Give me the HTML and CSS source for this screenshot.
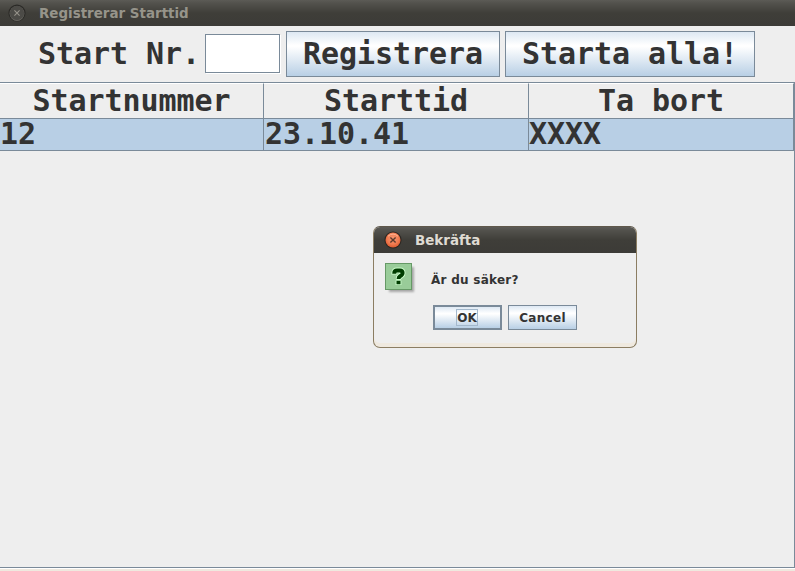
FILE: index.html
```html
<!DOCTYPE html>
<html lang="sv">
<head>
<meta charset="utf-8">
<title>Registrerar Starttid</title>
<link rel="stylesheet" href="styles.css">
</head>
<body>
<div class="window">
  <header class="titlebar">
    <svg class="close" width="18" height="18" viewBox="0 0 18 18">
      <circle cx="9" cy="9" r="8.6" fill="#2b2a27"/>
      <circle cx="9" cy="9.5" r="7.4" fill="#6b6963"/>
      <circle cx="9" cy="9" r="7.2" fill="#4c4b47"/>
      <path d="M6.4 6.4l5.2 5.2M11.6 6.4l-5.2 5.2" stroke="#97948b" stroke-width="1.1"/>
    </svg>
    <span class="title">Registrerar Starttid</span>
  </header>
  <form class="toolbar">
    <label class="label" for="nr">Start Nr.</label>
    <input class="field" id="nr" type="text">
    <button class="btn register" type="button">Registrera</button>
    <button class="btn start" type="button">Starta alla!</button>
  </form>
  <main class="scroll">
    <div class="grid head">
      <div>Startnummer</div><div>Starttid</div><div>Ta bort</div>
    </div>
    <div class="grid row">
      <div>12</div><div>23.10.41</div><div>XXXX</div>
    </div>
  </main>
</div>
<section class="dialog" role="dialog">
  <header class="dialog-title">
    <svg class="close" width="18" height="18" viewBox="0 0 18 18">
      <defs>
        <radialGradient id="orange" cx=".5" cy=".4" r=".6">
          <stop offset="0" stop-color="#f79873"/><stop offset=".65" stop-color="#f07b50"/><stop offset="1" stop-color="#dc5a2e"/>
        </radialGradient>
      </defs>
      <circle cx="9" cy="9" r="8.6" fill="#2b2622"/>
      <circle cx="9" cy="9" r="7.5" fill="url(#orange)"/>
      <path d="M4 5.2Q9 .9 14 5.2" fill="none" stroke="#ffb594" stroke-width="1"/>
      <path d="M6.4 6.4l5.2 5.2M11.6 6.4l-5.2 5.2" stroke="#5c3a2c" stroke-width="1.4"/>
    </svg>
    <span class="title">Bekräfta</span>
  </header>
  <div class="message">
    <svg width="32" height="32" viewBox="0 0 32 32">
      <defs><filter id="soft"><feGaussianBlur stdDeviation="1.3"/></filter></defs>
      <rect x="4" y="4" width="25" height="25" fill="#000" opacity=".3" filter="url(#soft)"/>
      <rect x=".5" y=".5" width="26" height="26" fill="#99cc99" stroke="#669966"/>
      <g fill="none" stroke-linejoin="round" transform="translate(-.3 .4)">
        <path d="M9.6 11V9.8Q9.6 7 12.3 7h2.9Q17.9 7 17.9 9.6q0 1.5-1.2 2.3l-1.6 1.1q-1.2.8-1.2 2.7M13.8 17v4.6" stroke="#ccffcc" stroke-width="5.8"/>
        <path d="M9.6 10.3V9.6Q9.6 7 12.3 7h2.9Q17.9 7 17.9 9.6q0 1.5-1.2 2.3l-1.6 1.1q-1.2.8-1.2 2.5M13.8 17.4v3.4" stroke="#003d00" stroke-width="4"/>
        <path d="M11.5 16.3h4.8" stroke="#ccffcc" stroke-width="1.3"/>
      </g>
    </svg>
    <span class="question">Är du säker?</span>
  </div>
  <div class="actions">
    <button class="small default" type="button"><span>OK</span></button>
    <button class="small cancel" type="button">Cancel</button>
  </div>
</section>
</body>
</html>
```
FILE: styles.css
```css
* { box-sizing: border-box; }
body {
  margin: 0;
  background: #eeeeee;
  color: #333333;
  font-family: "DejaVu Sans", sans-serif;
  overflow: hidden;
}
.window {
  width: 795px;
  height: 571px;
  display: flex;
  flex-direction: column;
  border-bottom: 2px solid #efe9df;
}
.titlebar {
  flex: none;
  height: 26px;
  display: flex;
  align-items: center;
  gap: 13px;
  padding-left: 8px;
  background: linear-gradient(#5c5b56 0, #53524d 3px, #3f3e39 13px, #3c3b37 100%);
  color: #96948a;
}
.title {
  padding-top: 2px;
  font-size: 13.45px;
  font-weight: bold;
  line-height: 16px;
}
.close { flex: none; }
.toolbar {
  flex: none;
  height: 56px;
  margin: 0;
  display: flex;
  align-items: center;
  padding-left: 38px;
  font: bold 30px "DejaVu Sans Mono", monospace;
  letter-spacing: -0.06px;
}
.label {
  width: 167px;
  line-height: 36px;
  white-space: nowrap;
}
.field {
  width: 75px;
  height: 39px;
  margin: 0 6px 1px 0;
  border: 1px solid #7a8a99;
  background: #ffffff;
  box-shadow: 1px 1px 0 #ffffff;
  font: inherit;
  outline: none;
}
.btn, .small {
  flex: none;
  padding: 0;
  border: 1px solid #7a8a99;
  background: linear-gradient(#dde8f3 0, #ffffff 30%, #ffffff 33%, #b8cfe5 100%);
  color: inherit;
}
.btn {
  height: 46px;
  font: inherit;
  letter-spacing: inherit;
  line-height: 44px;
}
.register { width: 214px; margin-right: 5px; }
.start { width: 250px; }
.scroll {
  flex: 1;
  border: 1px solid #7a8a99;
  border-left: 0;
  margin-bottom: 1px;
  outline: 1px solid #ffffff;
  clip-path: inset(0 0 -1px 0);
  font: bold 30px "DejaVu Sans Mono", monospace;
  letter-spacing: -0.06px;
}
.grid {
  display: grid;
  grid-template-columns: 264px 265px 265px;
}
.grid > div {
  border-right: 1px solid #7a8a99;
  border-bottom: 1px solid #7a8a99;
  white-space: nowrap;
}
.head > div {
  height: 36px;
  border-top: 1px solid #ffffff;
  line-height: 34px;
  text-align: center;
}
.row > div {
  height: 32px;
  background: #b8cfe5;
  line-height: 29px;
}
.row > div:nth-child(2) { padding-left: 1px; }
.dialog {
  position: absolute;
  left: 373px;
  top: 226px;
  width: 264px;
  height: 122px;
  display: flex;
  flex-direction: column;
  border: 1px solid #8b7d62;
  border-top-color: #5f584b;
  border-radius: 7px;
  overflow: hidden;
  background: #eeeeee;
  box-shadow: inset 0 -4px 0 #efe9df;
}
.dialog-title {
  flex: none;
  height: 26px;
  display: flex;
  align-items: center;
  gap: 13px;
  padding-left: 10px;
  background: linear-gradient(#5c5b56 0, #53524d 3px, #3f3e39 13px, #3c3b37 100%);
  color: #dfdbd2;
}
.message {
  display: flex;
  align-items: flex-start;
  padding: 10px 0 0 11px;
  height: 52px;
}
.question {
  margin-left: 14px;
  margin-top: 10px;
  font-size: 12px;
  font-weight: bold;
  line-height: 15px;
  letter-spacing: 0.26px;
}
.actions {
  display: flex;
  gap: 6px;
  padding-left: 59px;
}
.small {
  width: 69px;
  height: 25px;
  font: bold 12px "DejaVu Sans", sans-serif;
}
.cancel { letter-spacing: 0.3px; }
.default {
  border-width: 2px;
}
.default span {
  display: block;
  width: 22px;
  height: 17px;
  margin: 0 0 0 21px;
  line-height: 16px;
  border: 1px solid #a3b8cc;
}
```
